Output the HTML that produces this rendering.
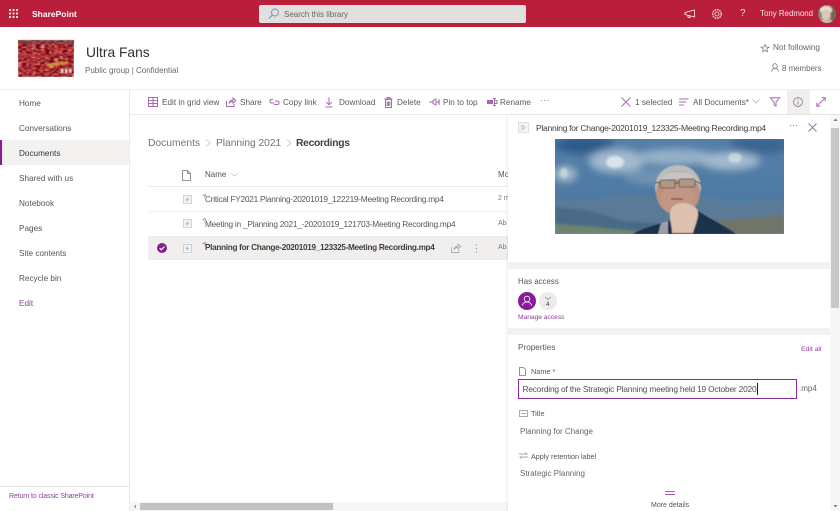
<!DOCTYPE html>
<html><head><meta charset="utf-8"><style>
html,body{margin:0;padding:0;background:#fff}
#p{position:relative;width:840px;height:511px;overflow:hidden;background:#fff;font-family:"Liberation Sans",sans-serif;font-size:8.5px;color:#484644;filter:blur(.3px)}
.t{position:absolute;white-space:nowrap;line-height:12px}
.b{position:absolute}
svg{position:absolute;overflow:visible}
.nav{left:19px;font-size:8.2px;color:#555}
.cmd{top:97px;font-size:8.2px;color:#5c5a58}
.i{fill:none;stroke:#a56bb0;stroke-width:1}
.g{fill:none;stroke:#777;stroke-width:.8}
</style></head><body><div id="p">
<div class="b" style="left:0;top:0;width:840px;height:27px;background:#b91f3a"></div>
<svg style="left:9px;top:9px" width="10" height="10"><g fill="#f4dbe0"><rect x="0" y="0" width="2" height="2"/><rect x="3.5" y="0" width="2" height="2"/><rect x="7" y="0" width="2" height="2"/><rect x="0" y="3.5" width="2" height="2"/><rect x="3.5" y="3.5" width="2" height="2"/><rect x="7" y="3.5" width="2" height="2"/><rect x="0" y="7" width="2" height="2"/><rect x="3.5" y="7" width="2" height="2"/><rect x="7" y="7" width="2" height="2"/></g></svg>
<div class="t" style="left:32px;top:8px;color:#fff;font-weight:bold;font-size:8.5px">SharePoint</div>
<div class="b" style="left:259px;top:5px;width:267px;height:18px;background:#e2e0de;border-radius:2px"></div>
<svg style="left:268px;top:8px" width="12" height="11"><circle cx="7" cy="4.5" r="3.5" fill="none" stroke="#6c93b8" stroke-width=".9"/><path d="M4.4 7L1 10.5" stroke="#6c93b8" fill="none"/></svg>
<div class="t" style="left:284px;top:9px;color:#666;font-size:8px">Search this library</div>
<svg style="left:684px;top:9px" width="12" height="10"><path d="M1 3.5L10.5 1V8L1 5.5ZM4 6V8.5H6V7" fill="none" stroke="#fff" stroke-width=".8"/></svg>
<svg style="left:711px;top:8px" width="12" height="12"><circle cx="6" cy="6" r="2" fill="none" stroke="#f6dfe3" stroke-width=".8"/><circle cx="6" cy="6" r="4.3" fill="none" stroke="#f6dfe3" stroke-width="1.4" stroke-dasharray="1.6 .9"/></svg>
<div class="t" style="left:740px;top:8px;color:#f6dfe3;font-size:10px">?</div>
<div class="t" style="left:760px;top:8px;color:#f8e6e9;font-size:7.9px">Tony Redmond</div>
<svg style="left:818px;top:5px" width="18" height="18" viewBox="0 0 18 18"><defs><clipPath id="av"><circle cx="9" cy="9" r="9"/></clipPath><filter id="bl"><feGaussianBlur stdDeviation=".8"/></filter></defs><g clip-path="url(#av)"><rect width="18" height="18" fill="#8f8270"/><g filter="url(#bl)"><rect x="13" y="0" width="5" height="18" fill="#70665a"/><ellipse cx="8" cy="5" rx="6" ry="4" fill="#e6e2da"/><ellipse cx="8" cy="10" rx="4.5" ry="6" fill="#e0c6b4"/><rect x="2" y="15" width="12" height="4" fill="#c8b8a8"/></g></g></svg>

<svg style="left:18px;top:40px" width="56" height="37" viewBox="0 0 56 37"><defs><filter id="cn" x="0" y="0" width="100%" height="100%" color-interpolation-filters="sRGB"><feTurbulence type="fractalNoise" baseFrequency=".22 .7" numOctaves="2" seed="7"/><feColorMatrix values="1 .9 0 0 -.3  0 1.6 0 0 -.62  0 1.6 0 0 -.6  0 0 0 0 1"/><feGaussianBlur stdDeviation=".45"/></filter><filter id="bc"><feGaussianBlur stdDeviation=".5"/></filter></defs><rect width="56" height="37" filter="url(#cn)"/><g filter="url(#bc)"><rect width="56" height="4" fill="#6a4a48" opacity=".55"/><path d="M28 24L50 21V24L30 27Z" fill="#d89a38" opacity=".85"/><rect x="0" y="15" width="30" height="2" fill="#c8383e" opacity=".7"/><rect x="30" y="8" width="26" height="2" fill="#c8383e" opacity=".7"/><rect x="43" y="29" width="2.5" height="4" fill="#e8dcd4"/><rect x="47" y="29" width="2.5" height="4" fill="#e8dcd4"/><rect x="51" y="29" width="2.5" height="4" fill="#e8dcd4"/></g></svg>
<div class="t" style="left:86px;top:44px;font-size:13.8px;line-height:18px;color:#323130">Ultra Fans</div>
<div class="t" style="left:85px;top:65px;color:#6a6866;font-size:8px">Public group | Confidential</div>
<svg style="left:761px;top:44px" width="8" height="8"><path d="M4 .3L5.1 3L8 3.2L5.8 5L6.5 7.8L4 6.2L1.5 7.8L2.2 5L0 3.2L2.9 3Z" fill="none" stroke="#777" stroke-width=".7"/></svg>
<div class="t" style="left:773px;top:42px;color:#666;font-size:8.2px">Not following</div>
<svg style="left:771px;top:63px" width="9" height="10"><circle cx="4" cy="3" r="2.3" class="g" stroke-width=".7"/><path d="M.6 8.7C.8 6.5 2.2 5.4 4 5.4S7.2 6.5 7.4 8.7" class="g" stroke-width=".7"/></svg>
<div class="t" style="left:782px;top:63px;color:#666;font-size:7.9px">8 members</div>

<div class="b" style="left:0;top:89px;width:840px;height:1px;background:#eee"></div>
<div class="b" style="left:129px;top:90px;width:1px;height:421px;background:#edebe9"></div>
<div class="b" style="left:130px;top:114px;width:710px;height:1px;background:#edebe9"></div>
<div class="b" style="left:0;top:140px;width:129px;height:25px;background:#f3f2f1"></div>
<div class="b" style="left:0;top:140px;width:1.5px;height:25px;background:#8a1c9a"></div>
<div class="t nav" style="top:98px">Home</div>
<div class="t nav" style="top:123px">Conversations</div>
<div class="t nav" style="top:148px;color:#333">Documents</div>
<div class="t nav" style="top:173px">Shared with us</div>
<div class="t nav" style="top:198px">Notebook</div>
<div class="t nav" style="top:223px">Pages</div>
<div class="t nav" style="top:248px">Site contents</div>
<div class="t nav" style="top:273px">Recycle bin</div>
<div class="t nav" style="top:298px;color:#8d3f9b">Edit</div>
<div class="b" style="left:0;top:486px;width:129px;height:1px;background:#e3e1df"></div>
<div class="t" style="left:9px;top:491px;color:#8d3f9b;font-size:7px;letter-spacing:-.13px">Return to classic SharePoint</div>

<svg style="left:148px;top:97px" width="10" height="10"><path d="M.5 .5H9.5V9.5H.5ZM.5 3.6H9.5M.5 6.5H9.5M5 .5V9.5" class="i" stroke-width=".9"/></svg>
<div class="t cmd" style="left:162px">Edit in grid view</div>
<svg style="left:226px;top:97px" width="10" height="10"><path d="M.5 4V9.5H8V7M3 6.5C3.5 4 5 3 7 3V1L9.8 3.6L7 6V4.4C5.5 4.4 4 5 3 6.5Z" class="i" stroke-width=".7"/></svg>
<div class="t cmd" style="left:240px">Share</div>
<svg style="left:269px;top:98px" width="11" height="8"><path d="M4 1.5H2.5C.5 1.5 .5 5 2.5 5H5.5M6 3H8.5C10.5 3 10.5 6.5 8.5 6.5H5" class="i" stroke-width=".7"/></svg>
<div class="t cmd" style="left:283px">Copy link</div>
<svg style="left:325px;top:97px" width="8" height="11"><path d="M4 .5V7.5M1.2 5L4 7.8L6.8 5M.5 10H7.5" class="i" stroke-width=".7"/></svg>
<div class="t cmd" style="left:339px">Download</div>
<svg style="left:384px;top:97px" width="9" height="11"><path d="M1.5 2.5H7.5V10.5H1.5ZM.5 2H8.5M3 2V.5H6V2M3.2 4.5V9M4.5 4.5V9M5.8 4.5V9" class="i" stroke-width=".7"/></svg>
<div class="t cmd" style="left:397px">Delete</div>
<svg style="left:429px;top:98px" width="11" height="8"><path d="M0 4H4M4 2.5L7 1V7L4 5.5ZM7 4H11M10 1V7" class="i" stroke-width=".7"/></svg>
<div class="t cmd" style="left:443px">Pin to top</div>
<svg style="left:487px;top:98px" width="10" height="8"><rect x="0" y="2" width="6" height="4" fill="#a56bb0"/><path d="M7.5 .5V7.5M6 .5H9M6 7.5H9M7.5 2.5H10V5.5H7.5" class="i" stroke-width=".7"/></svg>
<div class="t cmd" style="left:500px">Rename</div>
<div class="t cmd" style="left:540px;top:95px;letter-spacing:.5px">···</div>
<svg style="left:621px;top:97px" width="10" height="10"><path d="M.5 .5L9.5 9.5M9.5 .5L.5 9.5" class="i" stroke-width=".8"/></svg>
<div class="t cmd" style="left:635px">1 selected</div>
<svg style="left:679px;top:98px" width="10" height="8"><path d="M0 1H9.5M0 4H7.5M0 7H5" class="i" stroke-width=".8"/></svg>
<div class="t cmd" style="left:693px">All Documents*</div>
<svg style="left:752px;top:99px" width="8" height="5"><path d="M.5 .5L4 4L7.5 .5" fill="none" stroke="#aaa" stroke-width=".7"/></svg>
<svg style="left:770px;top:97px" width="10" height="10"><path d="M.5 .8H9.5L6 5V9L4 7.8V5Z" class="i" stroke-width=".8"/></svg>
<div class="b" style="left:787px;top:90px;width:23px;height:24px;background:#f0efee"></div>
<svg style="left:793px;top:97px" width="10" height="10"><circle cx="5" cy="5" r="4.4" fill="none" stroke="#7c5a85" stroke-width=".7"/><path d="M5 4.3V7.6M5 2.4V3.3" stroke="#7c5a85" fill="none" stroke-width=".7"/></svg>
<svg style="left:816px;top:97px" width="10" height="10"><path d="M.8 9.2L9.2 .8M5.8 .8H9.2V4.2M.8 5.8V9.2H4.2" class="i" stroke-width=".8"/></svg>

<div class="t" style="left:148px;top:137px;font-size:10.3px;line-height:14px;color:#757371">Documents</div>
<svg style="left:205px;top:139px" width="6" height="8"><path d="M1 .5L5 4L1 7.5" fill="none" stroke="#bbb" stroke-width=".7"/></svg>
<div class="t" style="left:216px;top:137px;font-size:10.2px;line-height:14px;color:#757371">Planning 2021</div>
<svg style="left:286px;top:139px" width="6" height="8"><path d="M1 .5L5 4L1 7.5" fill="none" stroke="#bbb" stroke-width=".7"/></svg>
<div class="t" style="left:296px;top:137px;font-size:10.3px;line-height:14px;color:#403f3e;font-weight:bold;letter-spacing:-.3px">Recordings</div>

<svg style="left:182px;top:170px" width="9" height="11"><path d="M.5 .5H5.5L8.5 3.5V10.5H.5ZM5.5 .5V3.5H8.5" class="g" stroke="#666"/></svg>
<div class="t" style="left:205px;top:169px;font-size:8px;color:#555">Name</div>
<svg style="left:231px;top:173px" width="7" height="4"><path d="M.5 .5L3.5 3.2L6.5 .5" fill="none" stroke="#bbb" stroke-width=".7"/></svg>
<div class="t" style="left:498px;top:169px;font-size:8px;color:#555">Mo</div>
<div class="b" style="left:148px;top:186px;width:360px;height:1px;background:#edebe9"></div>
<div class="b" style="left:148px;top:211px;width:360px;height:1px;background:#f0efee"></div>
<div class="b" style="left:148px;top:236px;width:360px;height:24px;background:#f0efee"></div>

<svg style="left:183px;top:195px" width="9" height="9"><rect x=".5" y=".5" width="8" height="8" fill="#eef2f6" stroke="#c4ccd4" stroke-width=".8"/><path d="M3.5 2.8L6 4.5L3.5 6.2Z" fill="#9aa6b4"/></svg>
<svg style="left:183px;top:219px" width="9" height="9"><rect x=".5" y=".5" width="8" height="8" fill="#eef2f6" stroke="#c4ccd4" stroke-width=".8"/><path d="M3.5 2.8L6 4.5L3.5 6.2Z" fill="#9aa6b4"/></svg>
<svg style="left:183px;top:244px" width="9" height="9"><rect x=".5" y=".5" width="8" height="8" fill="#eef2f6" stroke="#c4ccd4" stroke-width=".8"/><path d="M3.5 2.8L6 4.5L3.5 6.2Z" fill="#9aa6b4"/></svg>
<svg style="left:202px;top:193px" width="5" height="5"><path d="M.5 2.5L3.5 1.5M2.5 4.5L3.8 2" stroke="#a04aa8" stroke-width=".7" fill="none"/></svg>
<svg style="left:202px;top:217px" width="5" height="5"><path d="M.5 2.5L3.5 1.5M2.5 4.5L3.8 2" stroke="#a04aa8" stroke-width=".7" fill="none"/></svg>
<svg style="left:202px;top:241px" width="5" height="5"><path d="M.5 2.5L3.5 1.5M2.5 4.5L3.8 2" stroke="#a04aa8" stroke-width=".7" fill="none"/></svg>
<div class="t" style="left:205px;top:193px;font-size:8.3px;color:#5a5856;letter-spacing:-.25px">Critical FY2021 Planning-20201019_122219-Meeting Recording.mp4</div>
<div class="t" style="left:205px;top:218px;font-size:8.3px;color:#5a5856;letter-spacing:-.24px">Meeting in _Planning 2021_-20201019_121703-Meeting Recording.mp4</div>
<div class="t" style="left:205px;top:242px;font-size:8.2px;color:#3f3e3d;font-weight:bold;letter-spacing:-.3px">Planning for Change-20201019_123325-Meeting Recording.mp4</div>
<div class="t" style="left:498px;top:193px;font-size:7px;color:#777">2 m</div>
<div class="t" style="left:498px;top:218px;font-size:7px;color:#777">Ab</div>
<div class="t" style="left:498px;top:242px;font-size:7px;color:#777">Ab</div>
<svg style="left:157px;top:243px" width="10" height="10"><circle cx="5" cy="5" r="5" fill="#8a1c9a"/><path d="M2.7 5.2L4.4 6.8L7.4 3.6" stroke="#fff" stroke-width="1.2" fill="none"/></svg>
<svg style="left:451px;top:243px" width="10" height="10"><path d="M.5 4V9.5H8V7M3 6.5C3.5 4 5 3 7 3V1L9.8 3.6L7 6V4.4C5.5 4.4 4 5 3 6.5Z" fill="none" stroke="#999" stroke-width=".7"/></svg>
<svg style="left:475px;top:244px" width="3" height="9"><g fill="#888"><circle cx="1.5" cy="1" r=".6"/><circle cx="1.5" cy="4.5" r=".6"/><circle cx="1.5" cy="8" r=".6"/></g></svg>

<div class="b" style="left:130px;top:502px;width:378px;height:9px;background:#f6f6f6"></div>
<div class="b" style="left:140px;top:503px;width:193px;height:7px;background:#c2c2c2"></div>
<svg style="left:133px;top:504px" width="4" height="5"><path d="M3 .5L.8 2.5L3 4.5Z" fill="#999"/></svg>

<!-- details pane -->
<div class="b" style="left:508px;top:115px;width:332px;height:396px;background:#fff;box-shadow:-1px 0 2px rgba(0,0,0,.08)"></div>
<svg style="left:518px;top:122px" width="11" height="11"><rect x=".5" y=".5" width="10" height="10" fill="#f2f5f8" stroke="#d4dae2" stroke-width=".8"/><path d="M4 3.2L7.2 5.5L4 7.8Z" fill="none" stroke="#a6b2c0" stroke-width=".7"/></svg>
<div class="t" style="left:536px;top:122px;font-size:8.6px;color:#3f3e3d;letter-spacing:-.3px">Planning for Change-20201019_123325-Meeting Recording.mp4</div>
<div class="t" style="left:789px;top:119px;font-size:8.5px;color:#555;letter-spacing:.3px">···</div>
<svg style="left:808px;top:123px" width="9" height="9"><path d="M.5 .5L8.5 8.5M8.5 .5L.5 8.5" class="i" stroke-width=".8"/></svg>

<svg style="left:555px;top:139px" width="229" height="95" viewBox="0 0 229 95"><defs><linearGradient id="sky" x1="0" y1="0" x2="0" y2="1"><stop offset="0" stop-color="#557fa8"/><stop offset=".6" stop-color="#4d7aa3"/><stop offset="1" stop-color="#6a92ae"/></linearGradient><filter id="b1"><feGaussianBlur stdDeviation="4"/></filter><filter id="b2"><feGaussianBlur stdDeviation="1.2"/></filter><filter id="b3"><feGaussianBlur stdDeviation=".6"/></filter><clipPath id="ph"><rect width="229" height="95"/></clipPath></defs>
<g clip-path="url(#ph)"><rect width="229" height="95" fill="url(#sky)"/>
<g filter="url(#b1)"><ellipse cx="30" cy="6" rx="30" ry="9" fill="#2f5a8a"/><ellipse cx="205" cy="6" rx="30" ry="9" fill="#3a6592"/><ellipse cx="62" cy="22" rx="28" ry="12" fill="#a2b9cd"/><ellipse cx="120" cy="18" rx="40" ry="8" fill="#97b2c9"/><ellipse cx="175" cy="22" rx="30" ry="9" fill="#a2bace"/><ellipse cx="10" cy="35" rx="12" ry="8" fill="#a5b9c9"/><ellipse cx="100" cy="38" rx="30" ry="8" fill="#6f94b3"/></g>
<g filter="url(#b2)"><ellipse cx="60" cy="23" rx="9" ry="6" fill="#dbe4ea"/><ellipse cx="180" cy="19" rx="7" ry="5" fill="#c8d6df"/><ellipse cx="9" cy="34" rx="4" ry="5" fill="#c5d2da"/>
<path d="M0 61L30 63L60 58L90 55L120 60L155 58L180 66L205 62L229 62V95H0Z" fill="#5a7a98"/><path d="M0 68L35 72L70 82L110 85L160 82L229 76V95H0Z" fill="#4a6a86"/><path d="M0 85L40 88L90 93L100 95H0Z" fill="#6e8470"/><path d="M160 82L229 76V95H165Z" fill="#6f7468"/></g>
<g filter="url(#b3)"><path d="M78 95C85 90 98 87 107 84L143 72C155 80 172 88 181 95Z" fill="#1e3048"/><path d="M103 95L106 84L113 82V95Z" fill="#9aa0a8"/>
<ellipse cx="123" cy="48" rx="23" ry="22" fill="#bdbcba"/><ellipse cx="123" cy="54" rx="22" ry="22" fill="#bb9181"/><ellipse cx="122" cy="60" rx="17" ry="16" fill="#c29584"/>
<path d="M104 43C108 34 116 33 124 33C134 33 142 37 144 46C136 40 114 38 104 43Z" fill="#c6c5c3"/>
<rect x="105" y="41" width="15" height="8" rx="2" fill="#b09686" stroke="#4f4038" stroke-width=".8"/><rect x="124" y="40" width="16" height="8" rx="2" fill="#b09686" stroke="#4f4038" stroke-width=".8"/><path d="M100 44L105 43M120 44H124M140 42L146 45" stroke="#4a4038" stroke-width="1" fill="none"/>
<path d="M116 60H128" stroke="#7e4a40" stroke-width="1.3"/><path d="M116 70C120 62 135 62 142 70C145 76 141 84 138 94L117 94C117 85 113 78 116 70Z" fill="#dcc0b0"/></g></g></svg>

<div class="b" style="left:508px;top:262px;width:322px;height:7px;background:#f3f2f1"></div>
<div class="t" style="left:518px;top:276px;font-size:7.9px;color:#555">Has access</div>
<svg style="left:518px;top:292px" width="18" height="18"><circle cx="9" cy="9" r="9" fill="#8a1c9a"/><circle cx="9" cy="7" r="2.8" fill="none" stroke="#fff" stroke-width=".8"/><path d="M4.5 13.5C5 11 7 10 9 10S13 11 13.5 13.5" fill="none" stroke="#fff" stroke-width=".8"/></svg>
<svg style="left:539px;top:292px" width="18" height="18"><circle cx="9" cy="9" r="9" fill="#edebe9"/><path d="M6 5L8 6.8H10L12 5M9 6.8V8" fill="none" stroke="#888" stroke-width=".7"/></svg>
<div class="t" style="left:546px;top:300px;font-size:6.5px;line-height:9px;color:#444">4</div>
<div class="t" style="left:518px;top:312px;font-size:6.8px;color:#8d3f9b;letter-spacing:-.1px">Manage access</div>
<div class="b" style="left:508px;top:328px;width:322px;height:7px;background:#f3f2f1"></div>
<div class="t" style="left:518px;top:342px;font-size:8.2px;color:#555">Properties</div>
<div class="t" style="left:801px;top:344px;font-size:6.8px;color:#8d3f9b">Edit all</div>
<svg style="left:519px;top:367px" width="7" height="9"><path d="M.5 .5H4.5L6.5 2.5V8.5H.5Z" class="g"/></svg>
<div class="t" style="left:531px;top:366px;font-size:7.3px;color:#555">Name *</div>
<div class="b" style="left:518px;top:379px;width:277px;height:18px;border:1.5px solid #8a2b99;box-sizing:content-box;margin:-.5px"></div>
<div class="t" style="left:522.5px;top:383px;font-size:8.4px;color:#505050;letter-spacing:-.2px">Recording of the Strategic Planning meeting held 19 October 2020</div>
<div class="b" style="left:757px;top:383px;width:1px;height:12px;background:#222"></div>
<div class="t" style="left:799px;top:383px;font-size:8px;color:#666">.mp4</div>
<svg style="left:519px;top:410px" width="9" height="7"><rect x=".5" y=".5" width="8" height="6" fill="none" stroke="#888" stroke-width=".7"/><path d="M2 3.5H7" fill="none" stroke="#888" stroke-width=".7"/></svg>
<div class="t" style="left:531px;top:408px;font-size:7.3px;color:#555">Title</div>
<div class="t" style="left:520px;top:426px;font-size:8px;color:#666">Planning for Change</div>
<svg style="left:519px;top:452px" width="9" height="7"><path d="M0 2H8L6.5 .5M9 5H1L2.5 6.5" fill="none" stroke="#888" stroke-width=".7"/></svg>
<div class="t" style="left:531px;top:451px;font-size:7.2px;color:#555">Apply retention label</div>
<div class="t" style="left:520px;top:468px;font-size:8px;color:#666">Strategic Planning</div>
<div class="b" style="left:665px;top:491px;width:10px;height:1px;background:#a85fb5"></div>
<div class="b" style="left:665px;top:494px;width:10px;height:1px;background:#a85fb5"></div>
<div class="t" style="left:651px;top:500px;font-size:7px;color:#555">More details</div>

<div class="b" style="left:830px;top:115px;width:10px;height:396px;background:#f6f6f6"></div>
<div class="b" style="left:831px;top:128px;width:8px;height:180px;background:#c8c8c8"></div>
<svg style="left:833px;top:118px" width="5" height="4"><path d="M2.5 .5L4.5 3H.5Z" fill="#777"/></svg>
<svg style="left:833px;top:504px" width="5" height="4"><path d="M2.5 3.5L4.5 1H.5Z" fill="#777"/></svg>
</div></body></html>
